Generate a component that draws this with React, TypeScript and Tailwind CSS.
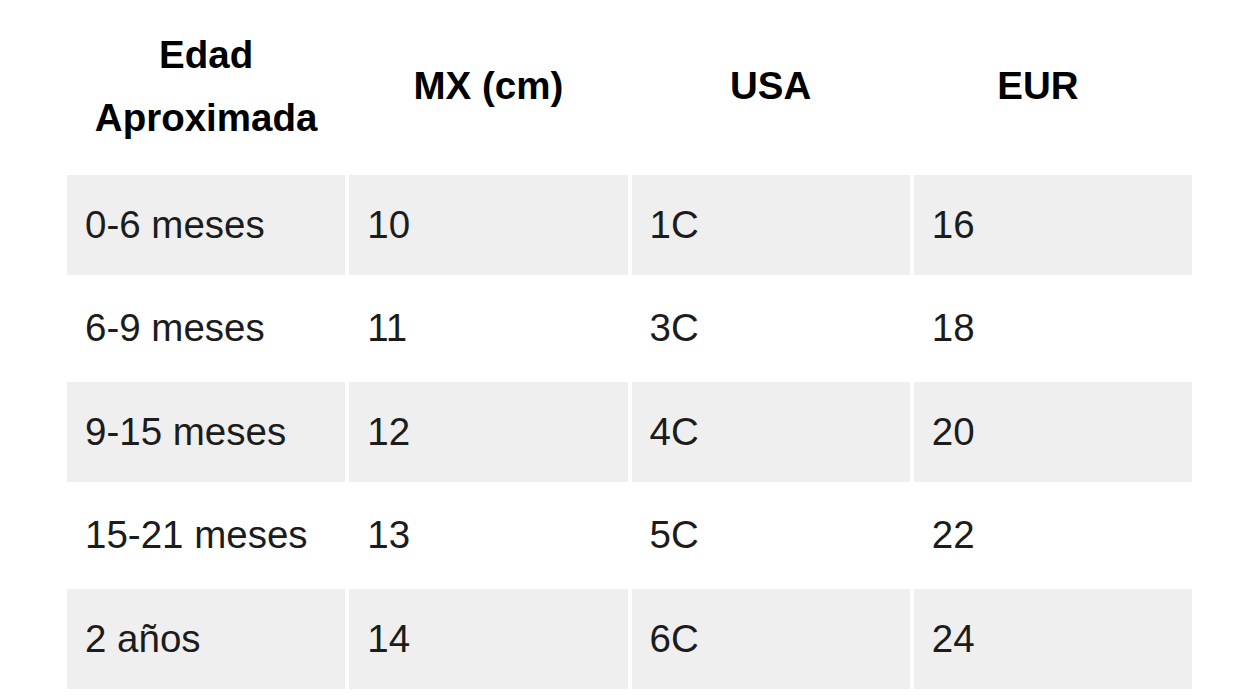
import React from "react";

const rows = [
  ["0-6 meses", "10", "1C", "16"],
  ["6-9 meses", "11", "3C", "18"],
  ["9-15 meses", "12", "4C", "20"],
  ["15-21 meses", "13", "5C", "22"],
  ["2 años", "14", "6C", "24"],
];

export default function App() {
  return (
    <div
      className="w-[1240px] h-[696px] bg-white overflow-hidden"
      style={{ fontFamily: '"Liberation Sans", Arial, sans-serif' }}
    >
      <div className="ml-[67px] w-[1125px] grid grid-cols-4 gap-x-[4px] gap-y-[4px]">
        <div className="h-[171px] flex items-center justify-center text-center text-[38.5px] font-bold leading-[63px] text-black">
          <span>Edad<br />Aproximada</span>
        </div>
        <div className="h-[171px] flex items-center justify-center text-[38.5px] font-bold text-black">MX (cm)</div>
        <div className="h-[171px] flex items-center justify-center text-[38.5px] font-bold text-black">USA</div>
        <div className="h-[171px] flex items-center justify-center pr-[30px] text-[38.5px] font-bold text-black">EUR</div>
        {rows.map((r, i) =>
          r.map((c, j) => (
            <div
              key={`${i}-${j}`}
              className={`h-[99.5px] flex items-center pl-[18px] text-[38.5px] text-[#1c1c1c] ${
                i % 2 === 0 ? "bg-[#efefef]" : "bg-white"
              }`}
            >
              {c}
            </div>
          ))
        )}
      </div>
    </div>
  );
}
